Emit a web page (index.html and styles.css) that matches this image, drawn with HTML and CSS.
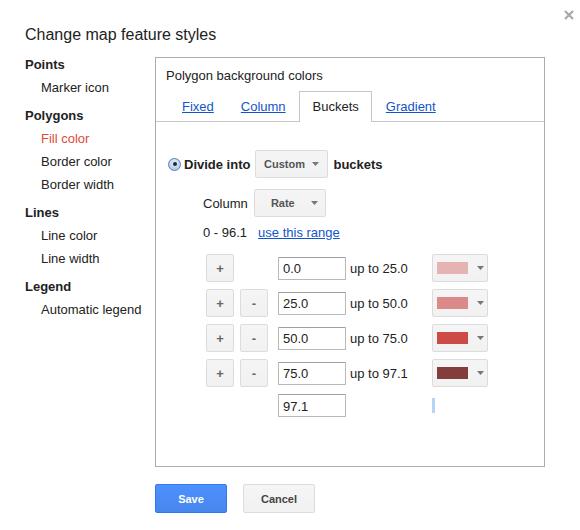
FILE: index.html
```html
<!DOCTYPE html>
<html lang="en">
<head>
<meta charset="utf-8">
<title>Change map feature styles</title>
<link rel="stylesheet" href="styles.css">
</head>
<body>
<div class="dialog">
  <h1 class="title">Change map feature styles</h1>
  <button class="close" aria-label="Close"><svg width="10" height="10" viewBox="0 0 10 10"><path d="M1 1L9 9M9 1L1 9" stroke="#a8a8a8" stroke-width="2.2"/></svg></button>
  <div class="main">
    <nav class="nav">
      <div class="nav-head">Points</div>
      <div class="nav-item">Marker icon</div>
      <div class="nav-head">Polygons</div>
      <div class="nav-item selected">Fill color</div>
      <div class="nav-item">Border color</div>
      <div class="nav-item">Border width</div>
      <div class="nav-head">Lines</div>
      <div class="nav-item">Line color</div>
      <div class="nav-item">Line width</div>
      <div class="nav-head">Legend</div>
      <div class="nav-item">Automatic legend</div>
    </nav>
    <section class="panel">
      <div class="panel-title">Polygon background colors</div>
      <div class="tabs">
        <a class="tab" href="#">Fixed</a>
        <a class="tab" href="#">Column</a>
        <span class="tab active">Buckets</span>
        <a class="tab" href="#">Gradient</a>
      </div>
      <div class="panel-body">
        <div class="divide-row">
          <span class="radio"><span class="radio-dot"></span></span>
          <span class="strong">Divide into</span>
          <span class="dropdown"><span class="dd-label">Custom</span><svg class="arrow" width="7" height="4" viewBox="0 0 7 4"><path d="M0 0H7L3.5 4Z" fill="#777"/></svg></span>
          <span class="strong">buckets</span>
        </div>
        <div class="column-row">
          <span>Column</span>
          <span class="dropdown"><span class="dd-label">Rate</span><svg class="arrow" width="7" height="4" viewBox="0 0 7 4"><path d="M0 0H7L3.5 4Z" fill="#777"/></svg></span>
        </div>
        <div class="range-row">
          <span>0 - 96.1</span>
          <a class="link" href="#">use this range</a>
        </div>
        <div class="buckets">
          <button class="btn-small cell-plus">+</button>
          <input class="num cell-input" value="0.0">
          <span class="upto">up to 25.0</span>
          <span class="color-btn"><span class="swatch c1"></span><svg class="arrow" width="7" height="4" viewBox="0 0 7 4"><path d="M0 0H7L3.5 4Z" fill="#777"/></svg></span>

          <button class="btn-small cell-plus">+</button>
          <button class="btn-small cell-minus">-</button>
          <input class="num cell-input" value="25.0">
          <span class="upto">up to 50.0</span>
          <span class="color-btn"><span class="swatch c2"></span><svg class="arrow" width="7" height="4" viewBox="0 0 7 4"><path d="M0 0H7L3.5 4Z" fill="#777"/></svg></span>

          <button class="btn-small cell-plus">+</button>
          <button class="btn-small cell-minus">-</button>
          <input class="num cell-input" value="50.0">
          <span class="upto">up to 75.0</span>
          <span class="color-btn"><span class="swatch c3"></span><svg class="arrow" width="7" height="4" viewBox="0 0 7 4"><path d="M0 0H7L3.5 4Z" fill="#777"/></svg></span>

          <button class="btn-small cell-plus">+</button>
          <button class="btn-small cell-minus">-</button>
          <input class="num cell-input" value="75.0">
          <span class="upto">up to 97.1</span>
          <span class="color-btn"><span class="swatch c4"></span><svg class="arrow" width="7" height="4" viewBox="0 0 7 4"><path d="M0 0H7L3.5 4Z" fill="#777"/></svg></span>

          <input class="num cell-input last-row" value="97.1">
          <span class="cursor-bar cell-color last-row"></span>
        </div>
      </div>
    </section>
  </div>
  <div class="actions">
    <button class="btn btn-save">Save</button>
    <button class="btn btn-cancel">Cancel</button>
  </div>
</div>
</body>
</html>
```

FILE: styles.css
```css
html, body {
  margin: 0;
  padding: 0;
  background: #fff;
}
body {
  font-family: "Liberation Sans", Arial, sans-serif;
  font-size: 13px;
  color: #222;
}
.dialog {
  position: relative;
  width: 580px;
  height: 530px;
  box-sizing: border-box;
  padding: 24px 0 0 25px;
}
.title {
  margin: 0 0 7px 0;
  font-size: 16px;
  font-weight: normal;
  line-height: 22px;
  color: #222;
}
.close {
  position: absolute;
  top: 10px;
  right: 6px;
  width: 10px;
  height: 10px;
  padding: 0;
  border: 0;
  background: none;
  display: flex;
}
.main {
  display: flex;
  align-items: flex-start;
}
.nav {
  width: 130px;
  flex: none;
}
.nav-head {
  font-weight: bold;
  line-height: 23px;
  margin-top: 5px;
}
.nav-head:first-child {
  margin-top: 0;
}
.nav-item {
  line-height: 23px;
  padding-left: 16px;
}
.nav-item.selected {
  color: #dd4b39;
}
.panel {
  margin-top: 4px;
  width: 390px;
  height: 410px;
  box-sizing: border-box;
  border: 1px solid #acacac;
  flex: none;
}
.panel-title {
  padding: 10px 0 0 10px;
  line-height: 16px;
}
.tabs {
  margin-top: 7px;
  padding-left: 12px;
  display: flex;
  border-bottom: 1px solid #c6c6c6;
  height: 30px;
}
.tab {
  display: block;
  padding: 0 12.5px;
  height: 29px;
  line-height: 29px;
  border: 1px solid transparent;
  border-bottom: 0;
  color: #15c;
  text-decoration: underline;
}
.tab:first-child {
  padding-left: 13px;
}
.tab.active {
  color: #222;
  text-decoration: none;
  border-color: #c6c6c6;
  background: #fff;
  height: 30px;
}
.panel-body {
  padding: 28px 0 0 12px;
}
.divide-row {
  display: flex;
  align-items: center;
  height: 28px;
}
.radio {
  width: 13px;
  height: 13px;
  box-sizing: border-box;
  border-radius: 50%;
  border: 1px solid #5a7fb3;
  background: radial-gradient(circle at 50% 35%, #e6f0fc 0%, #b6cdec 70%, #8eaedb 100%);
  display: flex;
  align-items: center;
  justify-content: center;
  margin-right: 3px;
}
.radio-dot {
  width: 4px;
  height: 4px;
  border-radius: 50%;
  background: #1e2a3c;
}
.strong {
  font-weight: bold;
}
.divide-row .dropdown {
  margin: 0 5px 0 5px;
}
.dropdown {
  display: inline-flex;
  align-items: center;
  width: 73px;
  height: 28px;
  box-sizing: border-box;
  border: 1px solid #dcdcdc;
  border-radius: 2px;
  background: linear-gradient(#f5f5f5, #f1f1f1);
}
.dd-label {
  width: 56px;
  text-align: center;
  font-size: 11px;
  font-weight: bold;
  color: #555;
}
.arrow {
  display: block;
  flex: none;
}
.column-row {
  margin-top: 11px;
  padding-left: 35px;
  display: flex;
  align-items: center;
  height: 28px;
}
.column-row .dropdown {
  margin-left: 6px;
  width: 72px;
}
.range-row {
  margin-top: 8px;
  padding-left: 35px;
  line-height: 16px;
  display: flex;
  gap: 11px;
}
.link {
  color: #15c;
  text-decoration: underline;
}
.buckets {
  margin-top: 13px;
  margin-left: 38px;
  display: grid;
  grid-template-columns: 34px 38px 72px 82px 56px;
  grid-template-rows: 28px 28px 28px 28px 23px;
  row-gap: 7px;
  align-items: center;
}
.last-row {
  grid-row: 5;
  margin-top: -1px;
}
.cell-plus { grid-column: 1; }
.cell-minus { grid-column: 2; }
.cell-input { grid-column: 3; }
.upto { grid-column: 4; }
.color-btn, .cell-color { grid-column: 5; }
.btn-small {
  width: 28px;
  height: 28px;
  padding: 0;
  box-sizing: border-box;
  border: 1px solid #dcdcdc;
  border-radius: 2px;
  background: linear-gradient(#f5f5f5, #f1f1f1);
  font-family: "Liberation Sans", Arial, sans-serif;
  font-size: 13px;
  font-weight: bold;
  color: #666;
}
.num {
  width: 68px;
  height: 23px;
  box-sizing: border-box;
  margin: 0;
  padding: 1px 4px 0;
  border: 1px solid #b9b9b9;
  border-top-color: #a0a0a0;
  border-radius: 1px;
  font-family: "Liberation Sans", Arial, sans-serif;
  font-size: 13px;
  color: #222;
  outline: none;
}
.color-btn {
  display: flex;
  align-items: center;
  width: 56px;
  height: 28px;
  box-sizing: border-box;
  border: 1px solid #dcdcdc;
  border-radius: 2px;
  background: linear-gradient(#f5f5f5, #f1f1f1);
  padding-left: 4px;
}
.color-btn .arrow {
  margin-left: 9px;
}
.swatch {
  width: 31px;
  height: 12px;
}
.c1 { background: #e5b3b2; }
.c2 { background: #da8b89; }
.c3 { background: #cd4b46; }
.c4 { background: #833e3b; }
.cursor-bar {
  width: 3px;
  height: 15px;
  background: #b5d4f8;
}
.actions {
  margin: 17px 0 0 130px;
  display: flex;
  gap: 16px;
}
.btn {
  width: 72px;
  height: 29px;
  box-sizing: border-box;
  border-radius: 2px;
  font-family: "Liberation Sans", Arial, sans-serif;
  font-size: 11px;
  font-weight: bold;
  padding: 0;
}
.btn-save {
  border: 1px solid #3079ed;
  background: linear-gradient(#4d90fe, #4787ed);
  color: #fff;
}
.btn-cancel {
  border: 1px solid #dcdcdc;
  background: linear-gradient(#f5f5f5, #f1f1f1);
  color: #444;
}
```
